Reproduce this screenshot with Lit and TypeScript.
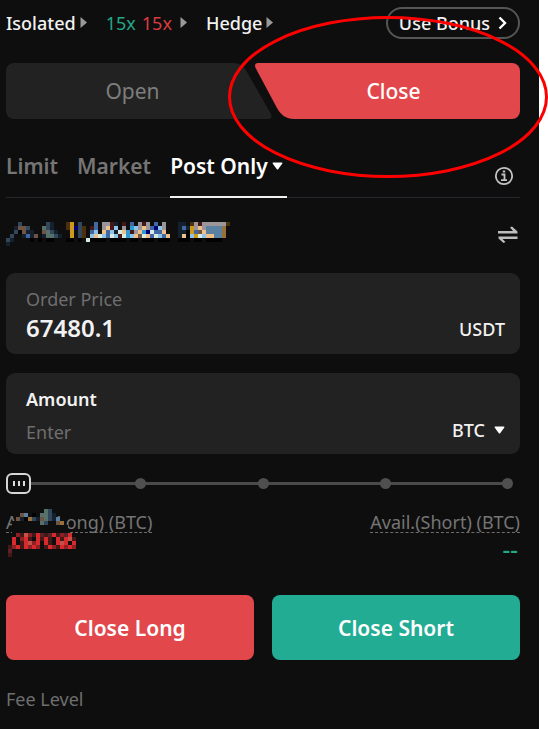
import { LitElement, html, svg, css } from "lit";
import { customElement, property } from "lit/decorators.js";

const PALETTE: Record<string, string> = {
  s: "#33475a", n: "#14202e", b: "#4068a4", l: "#8ec4ea", g: "#9b9499",
  G: "#cf991c", d: "#4a300c", o: "#efc08a", w: "#d8ece4", m: "#451818",
  t: "#56706a", k: "#020202", p: "#6e5444", B: "#00007a", c: "#2e9ad4",
  S: "#5a80a2", D: "#9a7038", x: "#0e0e0e", R: "#d8292d", r: "#8e2024",
  q: "#5c2028", P: "#c4504c",
};

const BALANCE = [
  "...s......sn...dG.s...b.ggmn.m.b.gmg.b.g...nn.dgmggggggd",
  "..npps...tsn...dGBsd.mb.goml.g.clgogbBlg...nbnGgogSSSSD.",
  "..skpnn..ptsn...G.sd.bl.oblnwocmgocBwbbo...nnkGbpoSSSSD.",
  ".s..nbnp.nttsn..G.sd.lowlbwlmwclopwobwlbo..noklGwlooSSD.",
  "sn....k.k.kk...kk.k.wkkkk.kkkk.kk.kkk.kkk..kkk.kk.kkkk..",
  "n.......................................................",
];

const LONG_AVAIL = [
  "...........ts......",
  ".....pS.k.ttsn.....",
  "....pnkDsnptsnS....",
  "...xxxxxxxtsxxpD...",
  "...xxxxxxxxxxxxxx..",
  "...xxxxxxxxxxxxxx..",
  "....rmPrmRqmqRmrqR.",
  "...R.rRm.RmRm.RmRPm",
  "...R.mRPrR.Rm.RPR.R",
  "..mrRmRrRr.mRrmRrRr",
  "..q................",
  "..m................",
];

@customElement("mosaic-patch")
class MosaicPatch extends LitElement {
  @property({ attribute: false }) rows: string[] = [];
  static styles = css`
    :host { display: block; }
    svg { display: block; }
  `;
  render() {
    const cell = 4;
    const w = this.rows[0].length * cell;
    const h = this.rows.length * cell;
    return html`<svg width=${w} height=${h} shape-rendering="crispEdges" aria-hidden="true">
      ${this.rows.map((row, y) =>
        [...row].map((c, x) =>
          PALETTE[c]
            ? svg`<rect x=${x * cell} y=${y * cell} width=${cell} height=${cell} fill=${PALETTE[c]} />`
            : null
        )
      )}
    </svg>`;
  }
}

@customElement("app-root")
class AppRoot extends LitElement {
  static styles = css`
    :host {
      display: block;
      position: relative;
      background: #fff;
      font-family: "Noto Sans", "Liberation Sans", sans-serif;
      font-size: 18px;
      line-height: 24px;
      color: #f2f2f2;
    }
    * { box-sizing: border-box; }
    svg { display: block; flex: none; }
    button, input, select {
      font: inherit;
      color: inherit;
      background: none;
      border: 0;
      margin: 0;
      padding: 0;
      outline: 0;
    }
    .panel {
      min-height: 100vh;
      margin-right: 9px;
      padding: 6px 19px 16px 6px;
      background: #0e0e0e;
    }
    .modes { display: flex; align-items: center; height: 33px; font-weight: 500; }
    .mode { display: flex; align-items: center; gap: 4px; margin-right: 19px; }
    .mode svg { color: #999; }
    .up { color: #22a887; }
    .down { color: #dc3b40; }
    .lev { display: flex; gap: 6px; margin-right: 4px; font-weight: 400; }
    .bonus {
      display: flex;
      align-items: center;
      gap: 8px;
      height: 32px;
      margin-left: auto;
      padding: 0 11px;
      border: 2px solid #555;
      border-radius: 16px;
    }
    .sides { display: flex; gap: 8px; margin-top: 24px; }
    .side {
      position: relative;
      flex: 1;
      height: 56px;
      font-size: 21px;
      font-weight: 400;
    }
    .side .body { position: absolute; top: 0; bottom: 0; }
    .side .slant { position: absolute; top: 0; }
    .side .text { position: relative; }
    .open { color: #7d7d7d; }
    .open .body { left: 0; right: 28px; background: #222; border-radius: 8px 0 0 8px; }
    .open .slant { right: -14px; color: #222; }
    .close { font-weight: 500; color: #fff; }
    .close .body { left: 30px; right: 0; background: #e2474b; border-radius: 0 8px 8px 0; }
    .close .slant { left: -12px; color: #e2474b; }
    .types {
      display: flex;
      gap: 19px;
      height: 52px;
      margin-top: 27px;
      border-bottom: 1px solid #24262b;
    }
    .type {
      display: flex;
      align-items: center;
      gap: 4px;
      height: 52px;
      padding-bottom: 10px;
      font-size: 21px;
      font-weight: 600;
      color: #757575;
      border-bottom: 2px solid transparent;
    }
    .type.on { padding-right: 4px; color: #fff; border-color: #f0f0f0; }
    .info { margin: 20px 6px 0 auto; height: 20px; }
    .balance { display: flex; justify-content: space-between; align-items: center; height: 28px; margin-top: 22px; }
    .field {
      display: flex;
      justify-content: space-between;
      align-items: flex-end;
      height: 81px;
      padding: 14px 15px 11px 20px;
      background: #222;
      border-radius: 9px;
    }
    .price { margin-top: 25px; }
    .amount { margin-top: 19px; padding-bottom: 10px; }
    .entry { display: flex; flex-direction: column; flex: 1; min-width: 0; }
    .entry label { color: #6e6e6e; }
    .entry input { width: 100%; height: 32px; }
    .price input { font-size: 24px; font-weight: 600; }
    .amount .entry { align-self: stretch; justify-content: space-between; }
    .amount input { height: 24px; }
    .amount label { font-weight: 600; color: #f2f2f2; }
    .entry input::placeholder { color: #6e6e6e; opacity: 1; }
    .unit { display: flex; align-items: center; gap: 9px; height: 28px; font-weight: 500; }
    .unit select { appearance: none; }
    .slider { position: relative; height: 22px; margin-top: 18px; }
    .ticks {
      position: absolute;
      inset: 0;
      display: flex;
      justify-content: space-between;
      align-items: center;
      padding: 0 7px;
    }
    .ticks::before {
      content: "";
      position: absolute;
      left: 12px;
      right: 12px;
      height: 3px;
      background: #4a4a4a;
    }
    .tick { position: relative; width: 11px; height: 11px; border-radius: 50%; background: #4f4f4f; }
    .slider input { position: relative; display: block; width: 100%; height: 22px; appearance: none; }
    .slider input::-webkit-slider-thumb {
      appearance: none;
      width: 25px;
      height: 21px;
      border: 2px solid #d6d6d6;
      border-radius: 6px;
      background:
        linear-gradient(#ddd, #ddd) 5px 6px / 2px 5px no-repeat,
        linear-gradient(#ddd, #ddd) 10px 6px / 2px 5px no-repeat,
        linear-gradient(#ddd, #ddd) 15px 6px / 2px 5px no-repeat,
        #0e0e0e;
    }
    .avail { display: flex; justify-content: space-between; margin-top: 16px; color: #757575; }
    .cell { position: relative; }
    .cell .name { border-bottom: 1px dashed #6e6e6e; line-height: 20px; display: block; margin-top: 2px; }
    .cell .value { display: block; height: 28px; line-height: 32px; font-size: 24px; font-weight: 500; padding-right: 2px; text-align: right; }
    .veil { position: absolute; left: 8px; top: 0; width: 52px; height: 26px; background: #0e0e0e; border-radius: 26px 26px 0 0; }
    .cell mosaic-patch { position: absolute; left: -6px; top: -1px; }
    .actions { display: grid; grid-template-columns: 1fr 1fr; gap: 18px; margin-top: 34px; }
    .action { height: 65px; border-radius: 8px; font-size: 21px; font-weight: 600; color: #fff; }
    .long { background: #e2474b; }
    .short { background: #22ac94; }
    .fee { margin: 27px 0 0; color: #6e6e6e; }
    .ring { position: absolute; top: 16px; right: 0; pointer-events: none; }
  `;

  private right() {
    return html`<svg width="7" height="11" viewBox="0 0 7 11"><path d="M.5 0L7 5.500L.5 11z" fill="currentColor" /></svg>`;
  }

  private caret() {
    return html`<svg width="11" height="8" viewBox="0 0 11 8"><path d="M1.500 .5H9.500Q11 .5 10.200 1.800L6.300 7Q5.500 8 4.700 7L.8 1.800Q0 .5 1.500 .5z" fill="#fff" /></svg>`;
  }

  render() {
    return html`
      <main class="panel">
        <div class="modes">
          <button class="mode">Isolated ${this.right()}</button>
          <button class="mode">
            <span class="lev"><span class="up">15x</span><span class="down">15x</span></span>${this.right()}
          </button>
          <button class="mode">Hedge ${this.right()}</button>
          <button class="bonus">
            Use Bonus
            <svg width="9" height="14" viewBox="0 0 9 14"><path d="M1.500 1.500L7 7L1.500 12.500" fill="none" stroke="#fff" stroke-width="2.400" /></svg>
          </button>
        </div>

        <div class="sides">
          <button class="side open">
            <span class="body"></span>
            <svg class="slant" width="43" height="56" viewBox="0 0 43 56"><path d="M0 0H3C9 0 14 3 17 9L41 51C42.500 54 41 56 38 56H0z" fill="currentColor" /></svg>
            <span class="text">Open</span>
          </button>
          <button class="side close">
            <span class="body"></span>
            <svg class="slant" width="43" height="56" viewBox="0 0 43 56"><path d="M43 0H3C0 0 -.5 2 .6 5L22 45C26 52 31 56 39 56H43z" fill="currentColor" /></svg>
            <span class="text">Close</span>
          </button>
        </div>

        <div class="types">
          <button class="type">Limit</button>
          <button class="type">Market</button>
          <button class="type on">Post Only ${this.caret()}</button>
          <button class="info" aria-label="Order type info">
            <svg width="20" height="20" viewBox="0 0 20 20" fill="none" stroke="#c4c4c4">
              <circle cx="10" cy="10" r="8.200" stroke-width="1.800" />
              <path d="M7.500 8.500H10.500V14M7 14.200H13" stroke-width="1.800" />
              <path d="M8.800 5.500H11.200" stroke-width="2" />
            </svg>
          </button>
        </div>

        <div class="balance">
          <mosaic-patch .rows=${BALANCE}></mosaic-patch>
          <button aria-label="Transfer">
            <svg width="24" height="22" viewBox="0 0 24 22" fill="#bdbdbd">
              <path d="M2 8H17L14 4.500L16 3.500L21.500 8.500V10.500H2zM21.500 13.500H2.500V15.500L7.500 20L9.500 19L6.500 16H21.500z" />
            </svg>
          </button>
        </div>

        <div class="field price">
          <div class="entry">
            <label for="price">Order Price</label>
            <input id="price" value="67480.1" />
          </div>
          <span class="unit">USDT</span>
        </div>

        <div class="field amount">
          <div class="entry">
            <label for="amount">Amount</label>
            <input id="amount" placeholder="Enter" />
          </div>
          <span class="unit">
            <select aria-label="Amount unit"><option>BTC</option></select>
            ${this.caret()}
          </span>
        </div>

        <div class="slider">
          <div class="ticks">${[0, 25, 50, 75, 100].map(() => html`<span class="tick"></span>`)}</div>
          <input type="range" min="0" max="100" value="0" aria-label="Amount percent" />
        </div>

        <div class="avail">
          <div class="cell">
            <span class="name">Avail.(Long) (BTC)</span>
            <span class="veil"></span>
            <mosaic-patch .rows=${LONG_AVAIL}></mosaic-patch>
          </div>
          <div class="cell">
            <span class="name">Avail.(Short) (BTC)</span>
            <span class="value up">--</span>
          </div>
        </div>

        <div class="actions">
          <button class="action long">Close Long</button>
          <button class="action short">Close Short</button>
        </div>
        <p class="fee">Fee Level</p>
      </main>
      <svg class="ring" width="320" height="162" aria-hidden="true">
        <ellipse cx="160" cy="81" rx="158.500" ry="79.500" fill="none" stroke="#f00" stroke-width="3" />
      </svg>
    `;
  }
}
